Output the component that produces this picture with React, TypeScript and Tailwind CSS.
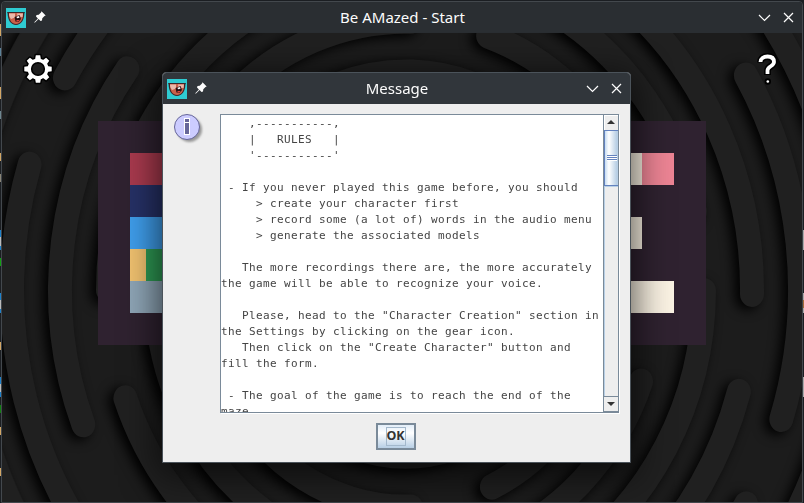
import React from "react";

const CX = 406;
const CY = 290;
const STRETCH = 1.077;

// Concentric bands of the maze backdrop: radius, start point, end point, sweep is clockwise.
type Band = [number, number, number, number, number];
const bands: Band[] = [
  [442, -20, 620, 60, 0],
  [442, 770, 0, 790, 560],
  [394, 64, 77, 120, 0],
  [394, 120, 620, 28, 164],
  [394, 748, 74, 784, 420],
  [394, 749, 506, 700, 600],
  [346, 82, 425, 126, 68],
  [346, 620, 0, 752, 294],
  [346, 740, 392, 640, 560],
  [298, 108, 290, 260, 10],
  [298, 240, 560, 126, 398],
  [298, 560, 10, 700, 210],
  [298, 703, 291, 560, 560],
  [250, 320, 560, 160, 240],
  [250, 240, 110, 411, 20],
  [250, 488, 36, 620, 170],
  [250, 640, 381, 485, 540],
  [202, 210, 250, 600, 250],
  [202, 411, 507, 210, 340],
  [202, 600, 330, 492, 487],
  [154, 550, 350, 260, 350],
];

function arc([r, x1, y1, x2, y2]: Band) {
  const a = Math.atan2((y1 - CY) / STRETCH, x1 - CX);
  let b = Math.atan2((y2 - CY) / STRETCH, x2 - CX);
  if (b < a) b += Math.PI * 2;
  const p = (t: number) => `${(r * Math.cos(t)).toFixed(1)} ${(r * Math.sin(t)).toFixed(1)}`;
  return `M${p(a)}A${r} ${r} 0 ${b - a > Math.PI ? 1 : 0} 1 ${p(b)}`;
}

function Backdrop() {
  return (
    <svg className="absolute inset-0" width="800" height="469" viewBox="2 33 800 469">
      <defs>
        <filter id="soft" filterUnits="userSpaceOnUse" x="-60" y="-60" width="920" height="640">
          <feGaussianBlur stdDeviation="6" />
        </filter>
      </defs>
      <rect x="0" y="30" width="804" height="475" fill="#1c1c1c" />
      <g filter="url(#soft)">
        {bands.map((b, i) => (
          <path key={i} d={arc(b)} transform={`translate(${CX - 5} ${CY + 3}) scale(1 ${STRETCH})`} fill="none" stroke="#000" strokeWidth="24" strokeLinecap="round" />
        ))}
      </g>
      {bands.map((b, i) => (
        <path key={i} d={arc(b)} transform={`translate(${CX} ${CY}) scale(1 ${STRETCH})`} fill="none" stroke="#202020" strokeWidth="24" strokeLinecap="round" />
      ))}
    </svg>
  );
}

function AppIcon() {
  return (
    <svg width="20" height="20" viewBox="0 0 20 20" className="shrink-0">
      <rect width="20" height="20" fill="#2fcbd2" />
      <path d="M1 4h18l-.6 1.500C18.300 12 15 17 10 17S1.700 12 1.600 5.500z" fill="#40262a" />
      <path d="M3 5h14v2c0 5-3 9-7 9S3 12 3 7z" fill="#c8614a" />
      <path d="M3 5.500h6v4L5 11C3.500 9 3 7.500 3 5.500zM11 5.500h6L16.500 9l-5-.5z" fill="#eab9ab" />
      <path d="M8.500 9l5-2 1.500 4-2.500 3-3-.5z" fill="#2a1013" />
      <path d="M10.500 8.800l2.500-.8.5 1.800-2.500.5z" fill="#fff" />
      <path d="M10.500 12h3l-1 1.500h-2z" fill="#e0463e" />
    </svg>
  );
}

function Pin() {
  return (
    <svg width="12" height="12" viewBox="0 0 12 12" className="mb-[2px] shrink-0" fill="#fcfcfc">
      <path d="M7.500.3 11.700 4.500 10.500 5 8.300 7.300 8 9.500 6.500 10 4.600 8.100 1 11.500.3 11.700.5 11 3.900 7.400 2 5.500 2.500 4 4.700 3.700 7 1.500z" />
    </svg>
  );
}

function WindowButtons() {
  return (
    <svg width="37" height="12" viewBox="0 0 37 12" fill="none" stroke="#fcfcfc" strokeWidth="1.200" className="mb-[2px] shrink-0">
      <path d="M1 4 6.500 9.500 12 4M26 2l9 9M35 2l-9 9" />
    </svg>
  );
}

function TitleBar({ title, main }: { title: string; main?: boolean }) {
  return (
    <div className={`grid h-[31px] shrink-0 grid-cols-[1fr_auto_1fr] items-center pl-1 pr-[7px] font-['Noto_Sans',sans-serif] text-[15px] text-[#fcfcfc] ${main ? "bg-[#2a2e32]" : "bg-[#31363b]"}`}>
      <div className="flex items-center gap-[8px]">
        <AppIcon />
        <Pin />
      </div>
      <div className="pl-[4px] leading-none">{title}</div>
      <div className="flex justify-end">
        <WindowButtons />
      </div>
    </div>
  );
}

const teeth = [
  "rotate(0)", "rotate(45)", "rotate(90)", "rotate(135)",
  "rotate(180)", "rotate(225)", "rotate(270)", "rotate(315)",
];

function Gear() {
  return (
    <svg width="32" height="32" viewBox="-16 -16 32 32" className="absolute left-[20px] top-[20px]">
      <g stroke="#000" strokeWidth="3" strokeLinejoin="round" fill="#fff">
        {teeth.map((t) => <path key={t} d="M-3-9-2.200-13.700H2.200L3-9z" transform={t} />)}
        <circle r="10.500" />
      </g>
      {teeth.map((t) => <path key={t} d="M-3-9-2.200-13.700H2.200L3-9z" transform={t} fill="#fff" />)}
      <circle r="10.500" fill="#fff" />
      <circle r="6.300" fill="#1d1d1d" stroke="#000" strokeWidth="1.600" />
    </svg>
  );
}

function Question() {
  return (
    <svg width="22" height="34" viewBox="0 0 22 34" className="absolute left-[754px] top-[19px]" fill="none">
      <path d="M4.500 10.500C4.500 6.500 7.500 4.500 11.500 4.500s6.500 2 6.500 5.500c0 4.500-6.500 4-6.500 8.500V23" stroke="#000" strokeWidth="6.800" />
      <circle cx="11.800" cy="29.500" r="3.200" fill="#000" />
      <path d="M4.500 10C4.500 6.500 7.500 4.500 11.500 4.500s6.500 2 6.500 5.500c0 4.500-6.500 4-6.500 8.500V22" stroke="#fff" strokeWidth="3.800" />
      <circle cx="11.800" cy="29.500" r="1.300" fill="#fff" />
    </svg>
  );
}

const leftRows = [
  ["bg-[#a93a4e]"],
  ["bg-[#263166]"],
  ["bg-[#3f9eec]"],
  ["bg-[#f1c270]", "bg-[#2e9a54]"],
  ["bg-[#8fa6b7]"],
];
const rightRows = [
  ["w-3 bg-[#faf2e3]", "w-8 bg-[#ec8494]"],
  [],
  ["w-3 bg-[#faf2e3]"],
  [],
  ["w-11 bg-[#faf2e3]"],
];

function TitleArt() {
  return (
    <div className="absolute left-[96px] top-[88px] flex h-[224px] w-[608px] justify-between bg-[#2f2230] p-8">
      <div className="flex flex-col">
        {leftRows.map((row, i) => (
          <div key={i} className="flex h-8 w-8">
            {row.map((c) => <div key={c} className={`flex-1 ${c}`} />)}
          </div>
        ))}
      </div>
      <div className="flex w-11 flex-col">
        {rightRows.map((row, i) => (
          <div key={i} className="flex h-8">
            {row.map((c) => <div key={c} className={c} />)}
          </div>
        ))}
      </div>
    </div>
  );
}

const rules = `    ,-----------,
    |   RULES   |
    '-----------'

 - If you never played this game before, you should
     > create your character first
     > record some (a lot of) words in the audio menu
     > generate the associated models

   The more recordings there are, the more accurately
the game will be able to recognize your voice.

   Please, head to the "Character Creation" section in
the Settings by clicking on the gear icon.
   Then click on the "Create Character" button and
fill the form.

 - The goal of the game is to reach the end of the
maze.`;

function InfoIcon() {
  return (
    <svg width="32" height="32" viewBox="0 0 32 32" className="shrink-0">
      <defs>
        <filter id="drop" x="-20%" y="-20%" width="150%" height="150%">
          <feGaussianBlur stdDeviation="1.300" />
        </filter>
      </defs>
      <circle cx="15.500" cy="15.500" r="12.500" fill="#999" filter="url(#drop)" />
      <circle cx="13" cy="13" r="12.500" fill="#ccccff" stroke="#666699" />
      <path d="M10 4h6v17h-6z" fill="#fff" />
      <path d="M11 5h4v3h-4zM11 9h4v11h-4z" fill="#666699" />
    </svg>
  );
}

function ScrollBar() {
  return (
    <div className="flex w-[15px] shrink-0 flex-col border-l border-[#7a8a99] bg-[#eee]">
      <div className="flex h-[15px] items-center justify-center border-l border-t border-white pr-px">
        <svg width="8" height="4" viewBox="0 0 8 4" className="mb-[2px]"><path d="M4 0 8 4H0z" fill="#333" /></svg>
      </div>
      <div className="flex h-[56px] flex-col items-center justify-center border border-r-0 border-[#6382bf] bg-linear-to-r from-[#c8ddf2] via-white via-30% to-[#b8cfe5] to-90%">
        <div className="h-[2px] w-[10px] border-b border-white bg-[#6382bf]" />
        <div className="h-[2px] w-[10px] border-b border-white bg-[#6382bf]" />
        <div className="h-[2px] w-[10px] border-b border-white bg-[#6382bf]" />
      </div>
      <div className="flex-1 border-l border-t border-[#b8cfe5]" />
      <div className="flex h-[16px] items-center justify-center border-b border-t border-[#7a8a99] pr-px">
        <svg width="8" height="4" viewBox="0 0 8 4"><path d="M0 0h8L4 4z" fill="#333" /></svg>
      </div>
    </div>
  );
}

function MessageDialog() {
  return (
    <div className="absolute left-[162px] top-[72px] flex h-[391px] w-[469px] flex-col overflow-hidden rounded-t-[4px] border border-[#4b535a] bg-[#eee] shadow-[0_8px_36px_4px_rgba(0,0,0,0.65)]">
      <TitleBar title="Message" />
      <div className="flex gap-[14px] pl-[11px] pr-[11px] pt-[10px]">
        <InfoIcon />
        <div className="flex h-[299px] min-w-0 flex-1 border border-[#7a8a99] bg-white shadow-[1px_1px_0_#fff]">
          <pre className="min-w-0 flex-1 overflow-hidden pt-px font-['DejaVu_Sans_Mono',monospace] text-[11px] leading-[16px] tracking-[0.378px] text-[#444]">{rules}</pre>
          <ScrollBar />
        </div>
      </div>
      <div className="flex justify-center pr-[2px] pt-[10px]">
        <button className="flex h-[27px] w-10 items-center justify-center border-2 border-[#7a8a99] bg-linear-to-b from-[#e2edf8] via-white via-35% to-[#b8cfe5]">
          <span className="flex h-[19px] w-5 items-center justify-center border border-[#a3b8cc] font-['Noto_Sans',sans-serif] text-[12.500px] font-bold leading-none text-[#333]">OK</span>
        </button>
      </div>
    </div>
  );
}

const leftSpecks = [
  "top-[24px] h-3 bg-[#d3a766]", "top-[48px] h-2 bg-[#5c8299]", "top-[87px] h-3 bg-[#d3a766]", "top-[111px] h-2 bg-[#6f8790]",
  "top-[153px] h-2 bg-[#d3a766]", "top-[174px] h-2 bg-[#8a8577]", "top-[230px] h-5 bg-[#1d82cc]", "top-[237px] h-[9px] bg-[#bbb]",
  "top-[258px] h-2 bg-[#11a011]", "top-[293px] h-5 bg-[#1d82cc]", "top-[300px] h-[9px] bg-[#bbb]", "top-[342px] h-2 bg-[#d3a766]",
  "top-[377px] h-5 bg-[#1d82cc]", "top-[384px] h-[8px] bg-[#bbb]", "top-[405px] h-2 bg-[#118011]", "top-[427px] h-2 bg-[#d3a766]", "top-[468px] h-2 bg-[#d3a766]",
];
const rightSpecks = ["top-[230px] h-5 bg-[#aaa]", "top-[293px] h-5 bg-[#aaa]", "top-[300px] h-2 bg-[#a56a38]", "top-[377px] h-5 bg-[#aaa]"];

export default function App() {
  return (
    <div className="relative h-[503px] w-[804px] overflow-hidden bg-[#1b1e22]">
      {leftSpecks.map((s) => <div key={s} className={`absolute left-0 w-px ${s}`} />)}
      {rightSpecks.map((s) => <div key={s} className={`absolute right-0 w-px ${s}`} />)}
      <div className="mx-px mt-px flex h-[502px] flex-col overflow-hidden rounded-t-[4px] border border-[#43484d]">
        <TitleBar title="Be AMazed - Start" main />
        <div className="relative flex-1 overflow-hidden">
          <Backdrop />
          <TitleArt />
          <Gear />
          <Question />
        </div>
      </div>
      <MessageDialog />
    </div>
  );
}
